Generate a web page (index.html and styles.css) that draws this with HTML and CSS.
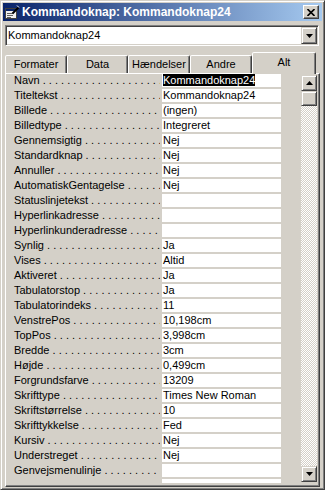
FILE: index.html
```html
<!DOCTYPE html>
<html lang="da">
<head>
    <meta charset="UTF-8">
    <title>Kommandoknap: Kommandoknap24</title>
    <link rel="stylesheet" href="styles.css">
</head>
<body>
    <div class="window">
        <div class="titlebar">
            <svg class="app-icon" width="16" height="16" viewBox="0 0 16 16">
                <rect x="1.5" y="4.5" width="11" height="10" fill="#f0f0f0" stroke="#404040"/>
                <rect x="2" y="5" width="10" height="2" fill="#0a246a"/>
                <path d="M3 9.5h6M3 11.5h6M3 13.5h4" stroke="#606060"/>
                <path d="M8.5 9.5 L14.5 3.5" stroke="#000" stroke-width="2"/>
                <path d="M13 1.5 l2 2" stroke="#fff"/>
            </svg>
            <span class="title">Kommandoknap: Kommandoknap24</span>
            <span class="close-btn">
                <svg width="8" height="7" viewBox="0 0 8 7">
                    <path d="M0.5 0 L7.5 7 M7.5 0 L0.5 7" stroke="#000" stroke-width="1.6"/>
                </svg>
            </span>
        </div>

        <div class="combo">
            <span class="combo-text">Kommandoknap24</span>
            <span class="combo-btn">
                <svg width="7" height="4" viewBox="0 0 7 4"><polygon points="0,0 7,0 3.5,4" fill="#000"/></svg>
            </span>
        </div>

        <div class="tabs">
            <div class="tab">Formater</div>
            <div class="tab tab-narrow">Data</div>
            <div class="tab">Hændelser</div>
            <div class="tab">Andre</div>
            <div class="tab tab-active">Alt</div>
        </div>

        <div class="panel">
            <div class="props">
                <div class="row"><span class="label">Navn</span><span class="value"><span class="selected">Kommandoknap24</span></span></div>
                <div class="row"><span class="label">Titeltekst</span><span class="value">Kommandoknap24</span></div>
                <div class="row"><span class="label">Billede</span><span class="value">(ingen)</span></div>
                <div class="row"><span class="label">Billedtype</span><span class="value">Integreret</span></div>
                <div class="row"><span class="label">Gennemsigtig</span><span class="value">Nej</span></div>
                <div class="row"><span class="label">Standardknap</span><span class="value">Nej</span></div>
                <div class="row"><span class="label">Annuller</span><span class="value">Nej</span></div>
                <div class="row"><span class="label">AutomatiskGentagelse</span><span class="value">Nej</span></div>
                <div class="row"><span class="label">Statuslinjetekst</span><span class="value"></span></div>
                <div class="row"><span class="label">Hyperlinkadresse</span><span class="value"></span></div>
                <div class="row"><span class="label">Hyperlinkunderadresse</span><span class="value"></span></div>
                <div class="row"><span class="label">Synlig</span><span class="value">Ja</span></div>
                <div class="row"><span class="label">Vises</span><span class="value">Altid</span></div>
                <div class="row"><span class="label">Aktiveret</span><span class="value">Ja</span></div>
                <div class="row"><span class="label">Tabulatorstop</span><span class="value">Ja</span></div>
                <div class="row"><span class="label">Tabulatorindeks</span><span class="value">11</span></div>
                <div class="row"><span class="label">VenstrePos</span><span class="value">10,198cm</span></div>
                <div class="row"><span class="label">TopPos</span><span class="value">3,998cm</span></div>
                <div class="row"><span class="label">Bredde</span><span class="value">3cm</span></div>
                <div class="row"><span class="label">Højde</span><span class="value">0,499cm</span></div>
                <div class="row"><span class="label">Forgrundsfarve</span><span class="value">13209</span></div>
                <div class="row"><span class="label">Skrifttype</span><span class="value">Times New Roman</span></div>
                <div class="row"><span class="label">Skriftstørrelse</span><span class="value">10</span></div>
                <div class="row"><span class="label">Skrifttykkelse</span><span class="value">Fed</span></div>
                <div class="row"><span class="label">Kursiv</span><span class="value">Nej</span></div>
                <div class="row"><span class="label">Understreget</span><span class="value">Nej</span></div>
                <div class="row"><span class="label">Genvejsmenulinje</span><span class="value"></span></div>
                <div class="row"><span class="label label-partial"></span><span class="value"></span></div>
            </div>

            <div class="scrollbar">
                <span class="sb-btn">
                    <svg width="7" height="4" viewBox="0 0 7 4"><polygon points="3.5,0 7,4 0,4" fill="#000"/></svg>
                </span>
                <span class="sb-thumb"></span>
                <span class="sb-track"></span>
                <span class="sb-btn">
                    <svg width="7" height="4" viewBox="0 0 7 4"><polygon points="0,0 7,0 3.5,4" fill="#000"/></svg>
                </span>
            </div>
        </div>
    </div>
</body>
</html>
```

FILE: styles.css
```css
* {
    margin: 0;
    padding: 0;
    box-sizing: border-box;
}

body {
    background: #d4d0c8;
    font-family: "Liberation Sans", Arial, sans-serif;
    font-size: 11px;
    color: #000;
    width: 325px;
    height: 490px;
    overflow: hidden;
}

/* Window frame */
.window {
    width: 325px;
    height: 490px;
    border: 1px solid;
    border-color: #d4d0c8 #404040 #404040 #d4d0c8;
    box-shadow: inset 1px 1px #fff, inset -1px -1px #808080;
    padding: 2px;
    display: flex;
    flex-direction: column;
}

.titlebar {
    height: 18px;
    display: flex;
    align-items: center;
    padding: 0 3px 0 1px;
    background: linear-gradient(90deg, #0a246a, #a6caf0);
}

.app-icon {
    flex: none;
}

.title {
    margin-left: 2px;
    color: #fff;
    font-weight: bold;
    font-size: 12px;
    white-space: nowrap;
}

.close-btn {
    margin-left: auto;
    width: 16px;
    height: 14px;
    background: #d4d0c8;
    border: 1px solid;
    border-color: #fff #404040 #404040 #fff;
    box-shadow: inset -1px -1px #808080;
    display: flex;
    align-items: center;
    justify-content: center;
}

/* Object picker */
.combo {
    margin: 4px 3px 0 2px;
    height: 21px;
    border: 1px solid;
    border-color: #808080 #fff #fff #808080;
    box-shadow: inset 1px 1px #404040, inset -1px -1px #d4d0c8;
    background: #fff;
    padding: 1px;
    display: flex;
    align-items: stretch;
}

.combo-text {
    padding-left: 1px;
    line-height: 17px;
}

.combo-btn {
    margin-left: auto;
    width: 16px;
    background: #d4d0c8;
    border: 1px solid;
    border-color: #d4d0c8 #404040 #404040 #d4d0c8;
    box-shadow: inset 1px 1px #fff, inset -1px -1px #808080;
    display: flex;
    align-items: center;
    justify-content: center;
}

/* Tabs */
.tabs {
    display: flex;
    align-items: flex-end;
    height: 21px;
    margin: 6px 0 0 2px;
}

.tab {
    width: 62px;
    height: 18px;
    border: 1px solid;
    border-bottom: none;
    border-color: #fff #404040 transparent #fff;
    box-shadow: inset -1px 0 #808080;
    border-radius: 2px 2px 0 0;
    text-align: center;
    line-height: 17px;
    background: #d4d0c8;
}

.tab-narrow {
    width: 61px;
}

.tab-active {
    width: 64px;
    height: 22px;
    margin-bottom: -1px;
    line-height: 18px;
    position: relative;
}

/* Property sheet */
.panel {
    margin-left: 2px;
    width: 315px;
    height: 414px;
    border: 1px solid;
    border-color: #fff #404040 #404040 #fff;
    box-shadow: inset -1px -1px #808080;
    padding: 0 2px 3px 7px;
    display: flex;
}

.props {
    flex: 1;
    overflow: hidden;
}

.row {
    display: grid;
    grid-template-columns: 147px 119px;
    column-gap: 2px;
    height: 13px;
    margin-bottom: 2px;
    line-height: 13px;
}

.label {
    padding-left: 1px;
    white-space: nowrap;
    overflow: hidden;
}

.label::after {
    content: " . . . . . . . . . . . . . . . . . . . . . . . . . . . . . .";
}

.label-partial::after {
    content: "        .   .                         .";
    white-space: pre;
}

.value {
    background: #fff;
    padding-left: 1px;
    white-space: nowrap;
    overflow: hidden;
}

.selected {
    background: #000;
    color: #fff;
}

/* Scrollbar */
.scrollbar {
    width: 16px;
    height: 407px;
    margin-top: 1px;
    display: flex;
    flex-direction: column;
    background: repeating-conic-gradient(#d4d0c8 0 25%, #fff 0 50%) 0 0 / 2px 2px;
}

.sb-btn,
.sb-thumb {
    background: #d4d0c8;
    border: 1px solid;
    border-color: #d4d0c8 #404040 #404040 #d4d0c8;
    box-shadow: inset 1px 1px #fff, inset -1px -1px #808080;
}

.sb-btn {
    height: 16px;
    display: flex;
    align-items: center;
    justify-content: center;
}

.sb-thumb {
    height: 15px;
}

.sb-track {
    flex: 1;
}
```
